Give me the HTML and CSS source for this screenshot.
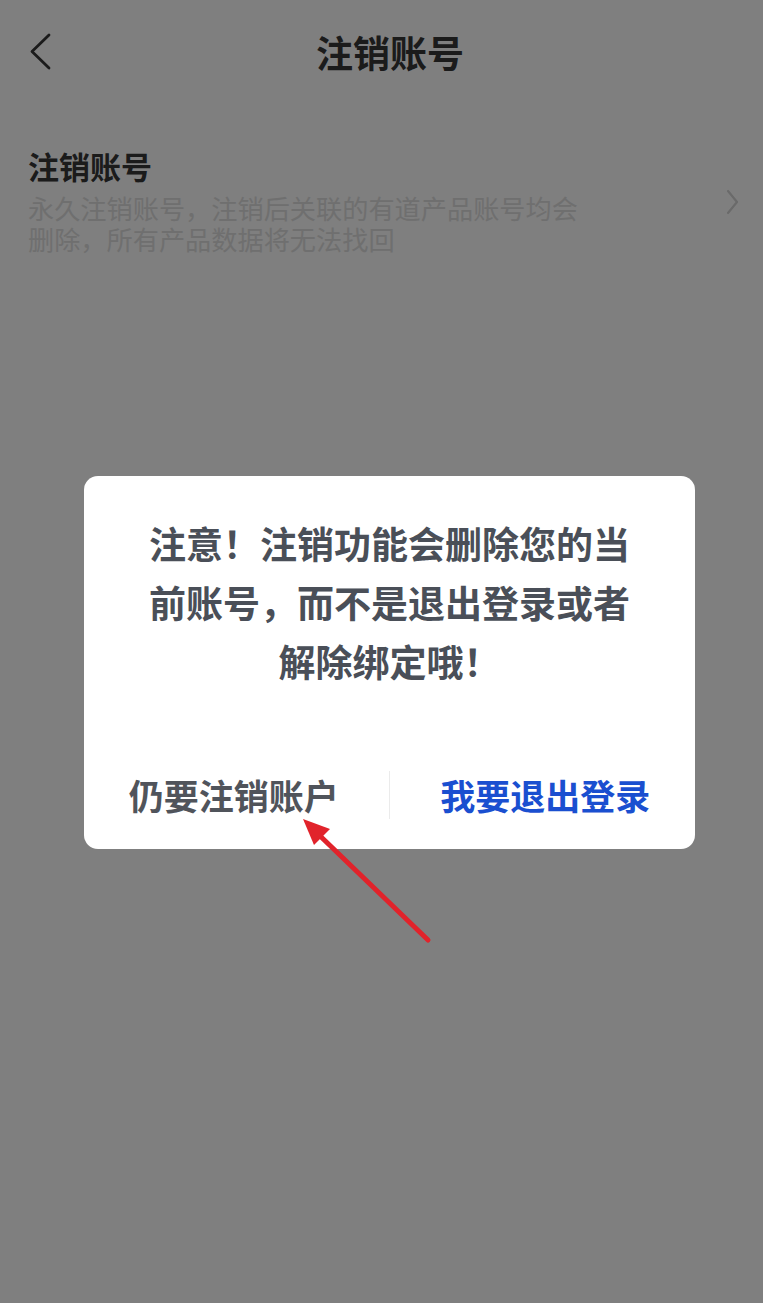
FILE: index.html
```html
<!DOCTYPE html>
<html lang="zh-CN">
<head>
<meta charset="utf-8">
<title>注销账号</title>
<link rel="stylesheet" href="styles.css">
</head>
<body>
<div class="page">
  <header class="nav">
    <div class="nav-back">
      <svg width="24" height="40" viewBox="0 0 24 40"><polyline points="20,3 3,19.5 20,36" fill="none" stroke="#363636" stroke-width="2.8" stroke-linecap="round" stroke-linejoin="round"/></svg>
    </div>
    <h1 class="nav-title">注销账号</h1>
    <div class="nav-side"></div>
  </header>
  <div class="item">
    <div class="item-text">
      <div class="item-title">注销账号</div>
      <div class="item-desc">永久注销账号，注销后关联的有道产品账号均会删除，所有产品数据将无法找回</div>
    </div>
    <svg class="item-arrow" width="14" height="26" viewBox="0 0 14 26"><polyline points="3,2 12,13 3,24" fill="none" stroke="#d4d4d4" stroke-width="2.2" stroke-linecap="round" stroke-linejoin="round"/></svg>
  </div>
</div>
<div class="mask">
  <div class="dialog">
    <p class="dialog-msg">注意！注销功能会删除您的当前账号，而不是退出登录或者解除绑定哦！</p>
    <div class="dialog-actions">
      <div class="btn btn-cancel">仍要注销账户</div>
      <div class="btn-sep"></div>
      <div class="btn btn-ok">我要退出登录</div>
    </div>
  </div>
</div>
<svg class="annot" width="763" height="1303" viewBox="0 0 763 1303">
  <line x1="428" y1="940" x2="316" y2="832" stroke="#e1232b" stroke-width="5" stroke-linecap="round"/>
  <polygon points="303,819 330,829 314,845" fill="#e1232b"/>
</svg>
</body>
</html>
```
FILE: styles.css
```css
html, body {
  margin: 0;
  padding: 0;
}
body {
  width: 763px;
  height: 1303px;
  position: relative;
  overflow: hidden;
  background: #ffffff;
  font-family: "Noto Sans CJK SC", "Noto Sans", sans-serif;
}
.page {
  height: 100%;
}
.nav {
  height: 104px;
  display: grid;
  grid-template-columns: 90px 1fr 90px;
  align-items: center;
}
.nav-back {
  padding-left: 29px;
  display: flex;
  align-items: center;
}
.nav-back svg {
  display: block;
}
.nav-title {
  margin: 0;
  padding-left: 17px;
  text-align: center;
  font-size: 37px;
  line-height: 50px;
  font-weight: 700;
  color: #363636;
}
.item {
  margin-top: 42px;
  padding: 0 24px 0 28px;
  display: flex;
  align-items: center;
  justify-content: space-between;
}
.item-title {
  font-size: 31px;
  line-height: 40px;
  font-weight: 700;
  color: #363636;
}
.item-desc {
  margin-top: 7px;
  width: 564px;
  font-size: 26.2px;
  line-height: 31px;
  color: #dedede;
}
.item-arrow {
  display: block;
  margin-top: 2px;
}
.mask {
  position: absolute;
  inset: 0;
  background: rgba(0, 0, 0, 0.5);
  padding-top: 476px;
  padding-left: 84px;
}
.dialog {
  width: 611px;
  height: 373px;
  box-sizing: border-box;
  background: #ffffff;
  border-radius: 14px;
  display: flex;
  flex-direction: column;
}
.dialog-msg {
  margin: 0;
  padding: 38px 60px 0;
  text-align: center;
  font-size: 37px;
  line-height: 59px;
  font-weight: 700;
  color: #4a4f58;
}
.dialog-actions {
  margin-top: auto;
  height: 108px;
  display: flex;
  align-items: center;
}
.btn {
  flex: 1;
  text-align: center;
  font-size: 35px;
  line-height: 48px;
  font-weight: 700;
}
.btn-cancel {
  color: #50545b;
  padding-right: 5px;
}
.btn-ok {
  color: #1a4fd0;
  padding-left: 6px;
}
.btn-sep {
  width: 1px;
  height: 48px;
  background: #ebebeb;
}
.annot {
  position: absolute;
  left: 0;
  top: 0;
}
```
